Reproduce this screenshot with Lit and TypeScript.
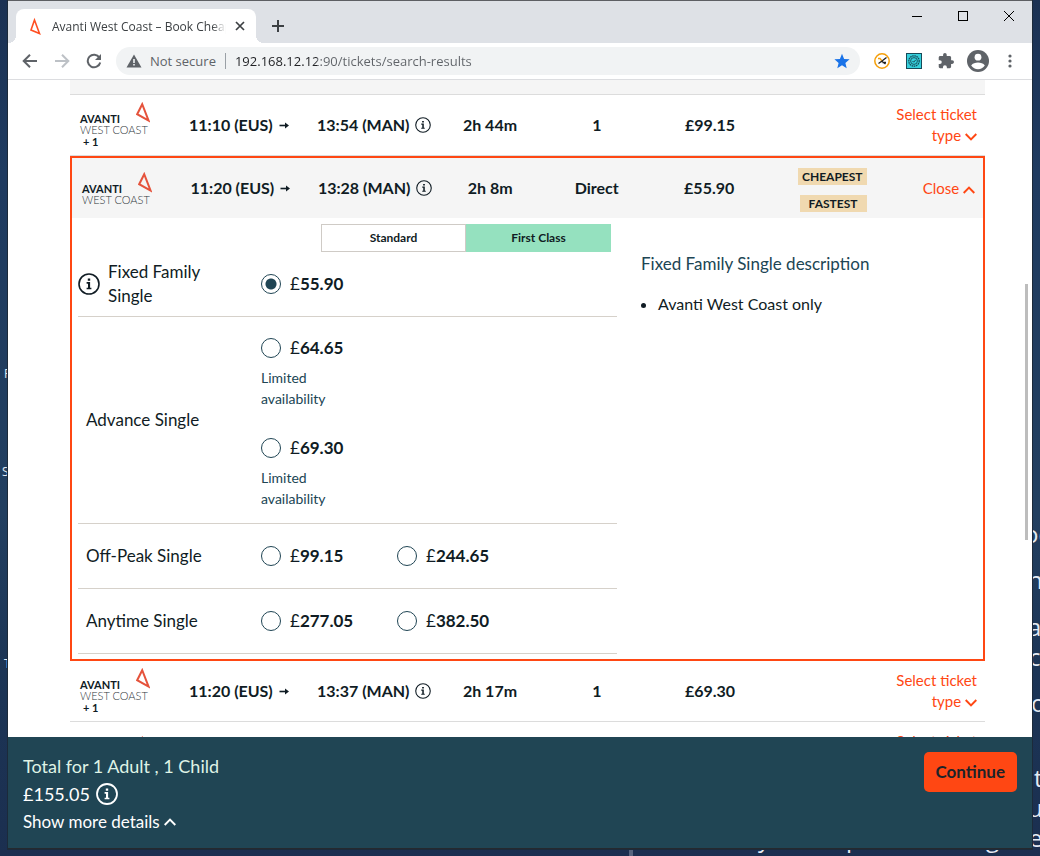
import { LitElement, html, css, svg, nothing } from "lit";
import { customElement, property, state } from "lit/decorators.js";
import { classMap } from "lit/directives/class-map.js";

interface Journey {
  from: string;
  to: string;
  duration: string;
  changes: string;
  price: string;
  extra?: string;
  badges?: string[];
}

interface Fare {
  name: string;
  info?: boolean;
  limited?: boolean;
  options: string[][];
}

const infoIcon = (size: number, stroke: number) => html`
  <svg width=${size} height=${size} viewBox="0 0 22 22" aria-hidden="true">
    <circle cx="11" cy="11" r="10" fill="none" stroke="currentColor" stroke-width=${stroke} />
    <path d="M9.8 5.4h2.4v2.3H9.8zM8.6 9.1h3.5v5.6h1.3v1.6H8.6v-1.6h1.4v-4H8.6z" fill="currentColor" />
  </svg>
`;

const chevron = (up: boolean) => html`
  <svg width="12" height="8" viewBox="0 0 12 8" aria-hidden="true">
    <path d=${up ? "M0.7 7L6 1.5L11.3 7" : "M0.7 1L6 6.5L11.3 1"} fill="none" stroke="currentColor" stroke-width="1.9" />
  </svg>
`;

const triangle = svg`<path d="M6.2 2.2L1.2 12.2L12.6 18.6L6.2 2.2Z" fill="none" stroke="#e5533c" stroke-width="2" />`;

@customElement("browser-chrome")
class BrowserChrome extends LitElement {
  static styles = css`
    :host {
      display: block;
      font-family: "Open Sans", "Noto Sans", sans-serif;
      color: #3c4043;
    }
    button {
      border: 0;
      padding: 0;
      background: none;
      color: inherit;
      display: grid;
      place-items: center;
    }
    svg {
      display: block;
    }
    .strip {
      display: flex;
      align-items: flex-end;
      height: 42px;
      background: #dee1e6;
      border-top: 1px solid #5d5f63;
      padding-left: 8px;
    }
    .tab {
      position: relative;
      display: flex;
      align-items: center;
      width: 240px;
      height: 34px;
      background: #fff;
      border-radius: 8px 8px 0 0;
      box-sizing: border-box;
      padding: 0 10px 0 12px;
      font-size: 12px;
    }
    .tab::before,
    .tab::after {
      content: "";
      position: absolute;
      bottom: 0;
      width: 8px;
      height: 8px;
    }
    .tab::before {
      left: -8px;
      background: radial-gradient(circle at 0 0, transparent 8px, #fff 8px);
    }
    .tab::after {
      right: -8px;
      background: radial-gradient(circle at 100% 0, transparent 8px, #fff 8px);
    }
    .title {
      flex: 1;
      min-width: 0;
      margin: 0 8px 0 10px;
      overflow: hidden;
      white-space: nowrap;
      mask-image: linear-gradient(90deg, #000 92%, transparent);
    }
    .new {
      width: 28px;
      height: 34px;
      margin-left: 8px;
    }
    .controls {
      display: flex;
      align-self: flex-start;
      margin-left: auto;
      color: #000;
    }
    .controls button {
      width: 46px;
      height: 29px;
    }
    .bar {
      display: flex;
      align-items: center;
      height: 36px;
      padding: 0 18px 0 14px;
      background: #fff;
      border-bottom: 1px solid #dcdde0;
      color: #5f6368;
    }
    .nav {
      display: flex;
      gap: 16px;
      margin-right: 14px;
    }
    .faded {
      color: #bdc1c6;
    }
    .address {
      flex: 1;
      display: flex;
      align-items: center;
      height: 28px;
      padding: 0 10px;
      border-radius: 14px;
      background: #f1f3f4;
      font-size: 13px;
    }
    .secure {
      margin-left: 8px;
      padding-right: 9px;
      border-right: 1px solid #9aa0a6;
      line-height: 16px;
    }
    .url {
      flex: 1;
      min-width: 0;
      border: 0;
      padding: 0 0 0 9px;
      background: linear-gradient(90deg, #202124 91px, #5f6368 91px);
      background-clip: text;
      outline: none;
      font: inherit;
      color: transparent;
    }
    .tools {
      display: flex;
      align-items: center;
      gap: 16px;
      margin-left: 14px;
    }
    .tools .menu {
      width: 8px;
      margin-left: 1px;
    }
    .tools .person {
      margin: 0 0 0 -3px;
    }
  `;

  render() {
    return html`
      <div class="strip">
        <div class="tab">
          <svg width="14" height="20" viewBox="0 0 14 20">
            <path d="M6.5 4L3 14L11.5 17.5Z" fill="none" stroke="#ff4f22" stroke-width="1.6" />
          </svg>
          <span class="title">Avanti West Coast – Book Cheap</span>
          <button aria-label="Close tab">
            <svg width="12" height="12" viewBox="0 0 12 12">
              <path d="M2 2L10 10M10 2L2 10" stroke="#3c4043" stroke-width="1.7" />
            </svg>
          </button>
        </div>
        <button class="new" aria-label="New tab">
          <svg width="12" height="12" viewBox="0 0 12 12">
            <path d="M6 0V12M0 6H12" stroke="#3c4043" stroke-width="2" />
          </svg>
        </button>
        <div class="controls">
          <button aria-label="Minimise">
            <svg width="10" height="10" viewBox="0 0 10 10"><path d="M0 5.5H10" stroke="currentColor" /></svg>
          </button>
          <button aria-label="Maximise">
            <svg width="10" height="10" viewBox="0 0 10 10">
              <rect x="0.5" y="0.5" width="9" height="9" fill="none" stroke="currentColor" />
            </svg>
          </button>
          <button aria-label="Close window">
            <svg width="10" height="10" viewBox="0 0 10 10"><path d="M0 0L10 10M10 0L0 10" stroke="currentColor" /></svg>
          </button>
        </div>
      </div>
      <div class="bar">
        <div class="nav">
          <button aria-label="Back">
            <svg width="16" height="16" viewBox="0 0 16 16">
              <path d="M15 8H2M8 1.7L1.7 8L8 14.3" fill="none" stroke="currentColor" stroke-width="2" />
            </svg>
          </button>
          <button class="faded" aria-label="Forward">
            <svg width="16" height="16" viewBox="0 0 16 16">
              <path d="M1 8H14M8 1.7L14.3 8L8 14.3" fill="none" stroke="currentColor" stroke-width="2" />
            </svg>
          </button>
          <button aria-label="Reload">
            <svg width="16" height="16" viewBox="0 0 16 16">
              <path d="M13.4 4.6A6.3 6.3 0 1 0 14.2 9.4" fill="none" stroke="currentColor" stroke-width="2" />
              <path d="M15 1V7H9Z" fill="currentColor" />
            </svg>
          </button>
        </div>
        <div class="address">
          <svg width="16" height="14" viewBox="0 0 16 14">
            <path d="M8 0.5L15.5 13.5H0.5Z" fill="#5f6368" />
            <path d="M7.2 5h1.6v4H7.2zM7.2 10h1.6v1.6H7.2z" fill="#f1f3f4" />
          </svg>
          <span class="secure">Not secure</span>
          <input class="url" aria-label="Address" value="192.168.12.12:90/tickets/search-results" />
          <button aria-label="Bookmark">
            <svg width="16" height="16" viewBox="0 0 16 16">
              <path d="M8 0.8L10.1 5.9L15.6 6.3L11.4 9.9L12.7 15.2L8 12.3L3.3 15.2L4.6 9.9L0.4 6.3L5.9 5.9Z" fill="#1a73e8" />
            </svg>
          </button>
        </div>
        <div class="tools">
          <button aria-label="Extension">
            <svg width="16" height="16" viewBox="0 0 16 16">
              <circle cx="8" cy="8" r="7.2" fill="#fff" stroke="#f59f0a" stroke-width="1.5" />
              <path d="M4 5.5H6L8 8" fill="none" stroke="#f59f0a" stroke-width="1.4" />
              <path d="M4.500 10.500L8 8L12.500 4.500M8 8.500L11.500 11M8.500 9.500H12" fill="none" stroke="#222" stroke-width="1.3" />
            </svg>
          </button>
          <button aria-label="Extension">
            <svg width="16" height="16" viewBox="0 0 16 16">
              <rect x="0.5" y="0.5" width="15" height="15" fill="#35d0dc" stroke="#174a58" />
              <circle cx="8" cy="8" r="5.2" fill="none" stroke="#174a58" stroke-width="1.2" stroke-dasharray="1.6 0.6" />
              <circle cx="8" cy="8" r="3.4" fill="none" stroke="#174a58" stroke-width="0.9" />
              <path d="M6.5 8L7.7 9.2L9.7 6.9" fill="none" stroke="#174a58" />
            </svg>
          </button>
          <button aria-label="Extensions">
            <svg width="16" height="16" viewBox="1 1 22 22">
              <path
                d="M20.5 11H19V7c0-1.1-.9-2-2-2h-4V3.5a2.5 2.5 0 0 0-5 0V5H4c-1.1 0-2 .9-2 2v3.8h1.5a2.7 2.7 0 0 1 0 5.4H2V20c0 1.1.9 2 2 2h3.8v-1.5a2.7 2.7 0 0 1 5.4 0V22H17c1.1 0 2-.9 2-2v-4h1.5a2.5 2.5 0 0 0 0-5z"
                fill="#5f6368"
              />
            </svg>
          </button>
          <button class="person" aria-label="Profile">
            <svg width="22" height="22" viewBox="0 0 22 22">
              <circle cx="11" cy="11" r="11" fill="#5f6368" />
              <circle cx="11" cy="7.2" r="3.4" fill="#fff" />
              <path d="M4.2 15.6C5.6 13.4 8.4 12.6 11 12.6S16.4 13.4 17.8 15.6A8.2 8.2 0 0 1 4.2 15.6Z" fill="#fff" />
            </svg>
          </button>
          <button class="menu" aria-label="Menu">
            <svg width="4" height="14" viewBox="0 0 4 14" fill="#5f6368">
              <circle cx="2" cy="2" r="1.6" />
              <circle cx="2" cy="7" r="1.6" />
              <circle cx="2" cy="12" r="1.6" />
            </svg>
          </button>
        </div>
      </div>
    `;
  }
}

@customElement("journey-row")
class JourneyRow extends LitElement {
  @property({ attribute: false }) journey!: Journey;
  @property({ type: Boolean }) open = false;

  static styles = css`
    :host {
      display: block;
      color: #101c24;
    }
    .row {
      display: grid;
      grid-template-columns: 119fr 128fr 123fr 100fr 114fr 112fr 102fr 117fr;
      align-items: center;
      min-height: 60px;
      font-size: 16px;
      line-height: 20px;
      font-weight: 700;
    }
    .open {
      background: #f5f5f5;
    }
    .brand {
      display: grid;
      grid-template-columns: 42px 28px;
      grid-template-rows: 11px 11px 11px;
      padding-left: 10px;
      font-size: 11px;
      line-height: 11px;
      white-space: nowrap;
    }
    .mark {
      grid-area: 1 / 2 / 3 / 3;
      justify-self: end;
      display: block;
    }
    .name {
      grid-area: 2 / 1;
    }
    .line {
      grid-area: 3 / 1 / 4 / 3;
      font-weight: 300;
      color: #30373c;
    }
    .extra {
      grid-area: 4 / 1 / 5 / 3;
      padding-left: 3px;
      line-height: 13px;
    }
    .stop {
      display: flex;
      align-items: center;
      gap: 6px;
      white-space: nowrap;
    }
    .mid {
      text-align: center;
    }
    .badges {
      display: grid;
      justify-items: end;
      gap: 10px;
      padding-top: 3px;
    }
    .badge {
      padding: 0 4px;
      background: #f0d9b0;
      font-size: 12px;
      line-height: 17px;
    }
    .wide {
      padding: 0 9px;
    }
    .toggle {
      justify-self: end;
      width: 90px;
      padding: 0 8px 0 0;
      border: 0;
      background: none;
      font: 400 15px/21px "Lato", sans-serif;
      color: #ff4713;
      text-align: right;
    }
  `;

  render() {
    const j = this.journey;
    return html`
      <div class=${classMap({ row: true, open: this.open })}>
        <div class="brand">
          <svg class="mark" width="14" height="22" viewBox="0 0 14 22">${triangle}</svg>
          <span class="name">AVANTI</span>
          <span class="line">WEST COAST</span>
          ${j.extra ? html`<span class="extra">${j.extra}</span>` : nothing}
        </div>
        <div class="stop">
          ${j.from}
          <svg width="11" height="8" viewBox="0 0 11 8" aria-hidden="true">
            <path d="M0.5 4.5H8" stroke="currentColor" stroke-width="1.6" />
            <path d="M6 1.5L10 4.5L6 7.5Z" fill="currentColor" />
          </svg>
        </div>
        <div class="stop">${j.to} ${infoIcon(16, 1.5)}</div>
        <div class="mid">${j.duration}</div>
        <div class="mid">${j.changes}</div>
        <div class="mid">${j.price}</div>
        <div class="badges">
          ${(j.badges ?? []).map(
            (b) => html`<span class=${classMap({ badge: true, wide: b.length < 8 })}>${b}</span>`
          )}
        </div>
        <button class="toggle" aria-expanded=${this.open}>
          ${this.open ? "Close" : "Select ticket type"} ${chevron(this.open)}
        </button>
      </div>
    `;
  }
}

@customElement("fare-panel")
class FarePanel extends LitElement {
  @state() private chosen = "55.90";

  private fares: Fare[] = [
    { name: "Fixed Family Single", info: true, options: [["55.90"]] },
    { name: "Advance Single", limited: true, options: [["64.65"], ["69.30"]] },
    { name: "Off-Peak Single", options: [["99.15", "244.65"]] },
    { name: "Anytime Single", options: [["277.05", "382.50"]] },
  ];

  static styles = css`
    :host {
      display: grid;
      grid-template-columns: 539fr 336fr;
      gap: 24px;
      padding: 6px 6px 5px;
      color: #101c24;
      font-size: 17px;
      line-height: 24px;
    }
    .classes {
      display: grid;
      grid-template-columns: 1fr 1fr;
      width: 290px;
      margin: 0 6px 0 auto;
    }
    .classes button {
      height: 28px;
      border: 1px solid #cfcbc6;
      padding: 0;
      background: #fff;
      font: 700 12px/16px "Lato", sans-serif;
      color: #101c24;
    }
    .classes .on {
      border-color: #95e1bf;
      background: #95e1bf;
    }
    .fare {
      display: grid;
      grid-template-columns: 183fr 356fr;
      align-items: center;
      min-height: 64px;
      border-bottom: 1px solid #d6d1ca;
    }
    .name {
      display: flex;
      align-items: center;
      gap: 8px;
      padding-left: 8px;
    }
    .info {
      padding: 0 50px 0 0;
    }
    .name svg {
      flex: none;
    }
    .options {
      display: grid;
      gap: 27px;
    }
    .limited {
      padding: 19px 0 14px;
    }
    .pair {
      display: grid;
      grid-template-columns: 136fr 220fr;
    }
    label {
      display: flex;
      align-items: center;
      gap: 9px;
      font-weight: 700;
    }
    .pound {
      font-weight: 400;
    }
    input {
      appearance: none;
      width: 20px;
      height: 20px;
      margin: 0;
      border: 1px solid #204554;
      border-radius: 50%;
      background: #fff;
    }
    input:checked {
      background: radial-gradient(circle, #204554 5px, #fff 6px);
    }
    .note {
      width: 80px;
      margin: 7px 0 0;
      font-size: 14px;
      line-height: 21px;
      color: #204554;
    }
    .about {
      padding-top: 28px;
    }
    h2 {
      margin: 0 0 16px;
      font-size: 17px;
      line-height: 24px;
      font-weight: 400;
      color: #204554;
    }
    ul {
      margin: 0;
      padding-left: 17px;
      font-size: 16px;
    }
  `;

  render() {
    return html`
      <div>
        <div class="classes">
          <button>Standard</button>
          <button class="on">First Class</button>
        </div>
        ${this.fares.map(
          (fare) => html`
            <div class="fare" role="group" aria-label=${fare.name}>
              <div class=${classMap({ name: true, info: !!fare.info })}>
                ${fare.info ? infoIcon(22, 1.6) : nothing}<span>${fare.name}</span>
              </div>
              <div class=${classMap({ options: true, limited: !!fare.limited })}>
                ${fare.options.map(
                  (pair) => html`
                    <div>
                      <div class="pair">
                        ${pair.map(
                          (price) => html`
                            <label>
                              <input
                                type="radio"
                                name="fare"
                                .checked=${this.chosen === price}
                                @change=${() => (this.chosen = price)}
                              />
                              <span><span class="pound">£</span>${price}</span>
                            </label>
                          `
                        )}
                      </div>
                      ${fare.limited ? html`<p class="note">Limited availability</p>` : nothing}
                    </div>
                  `
                )}
              </div>
            </div>
          `
        )}
      </div>
      <div class="about">
        <h2>Fixed Family Single description</h2>
        <ul>
          <li>Avanti West Coast only</li>
        </ul>
      </div>
    `;
  }
}

@customElement("app-root")
class AppRoot extends LitElement {
  private journeys: Journey[] = [
    { from: "11:10 (EUS)", to: "13:54 (MAN)", duration: "2h 44m", changes: "1", price: "£99.15", extra: "+ 1" },
    {
      from: "11:20 (EUS)",
      to: "13:28 (MAN)",
      duration: "2h 8m",
      changes: "Direct",
      price: "£55.90",
      badges: ["CHEAPEST", "FASTEST"],
    },
    { from: "11:20 (EUS)", to: "13:37 (MAN)", duration: "2h 17m", changes: "1", price: "£69.30", extra: "+ 1" },
    { from: "11:40 (EUS)", to: "13:49 (MAN)", duration: "2h 9m", changes: "Direct", price: "£69.30" },
  ];

  private wallpaper = [
    { text: "oc", x: 1024, y: 520 },
    { text: "n", x: 1028, y: 566 },
    { text: "at", x: 1028, y: 613 },
    { text: "c", x: 1029, y: 643 },
    { text: "o", x: 1031, y: 689 },
    { text: "t", x: 1034, y: 764 },
    { text: "u", x: 1028, y: 794 },
    { text: "e", x: 1029, y: 824 },
    { text: "y", x: 758, y: 824 },
    { text: "p", x: 846, y: 824 },
    { text: "g", x: 986, y: 824 },
  ];

  private shortcuts = [
    { text: "P", x: 4, y: 366 },
    { text: "S", x: 2, y: 464 },
    { text: "T", x: 4, y: 656 },
  ];

  static styles = css`
    :host {
      display: block;
      position: relative;
      height: 100vh;
      overflow: hidden;
      background: linear-gradient(180deg, #1b3153, #1f3b60 20%, #223f60 60%, #1c3556 78%, #1b2f50);
      font-family: "Lato", sans-serif;
    }
    .wall,
    .shortcut {
      position: absolute;
      color: #e4eaf2;
      font: 24px/28px "Open Sans", sans-serif;
    }
    .shortcut {
      font-size: 12px;
      line-height: 16px;
    }
    .rule {
      position: absolute;
      left: 629px;
      bottom: 0;
      width: 4px;
      height: 20px;
      background: #56657f;
    }
    .window {
      position: relative;
      display: flex;
      flex-direction: column;
      height: calc(100vh - 7px);
      margin: 0 8px;
      box-sizing: border-box;
      border-bottom: 1px solid #25292e;
      background: #fff;
      box-shadow: 0 0 0 1px #1c2a3a;
    }
    .page {
      position: relative;
      flex: 1;
      min-height: 0;
      overflow: hidden;
      padding: 0 47px 0 62px;
    }
    .heading {
      height: 14px;
      background: #f5f5f5;
      border-bottom: 1px solid #dcdcdc;
    }
    .item {
      border-bottom: 1px solid #dcdcdc;
    }
    .expanded {
      border: 2px solid #ff4713;
    }
    .thumb {
      position: absolute;
      top: 204px;
      right: 4px;
      width: 3px;
      height: 256px;
      background: #bdbdbd;
    }
    .basket {
      display: flex;
      justify-content: space-between;
      align-items: flex-start;
      padding: 15px 15px 13px;
      background: #204554;
      color: #fff;
      font-size: 18px;
    }
    .total {
      display: grid;
      line-height: 28px;
    }
    .who {
      color: #dff3e6;
    }
    .sum {
      display: flex;
      align-items: center;
      gap: 6px;
    }
    .more {
      display: flex;
      align-items: center;
      gap: 4px;
      border: 0;
      padding: 0;
      background: none;
      color: inherit;
      font: 400 17px/27px "Lato", sans-serif;
    }
    .continue {
      height: 40px;
      padding: 0 12px;
      border: 0;
      border-radius: 5px;
      background: #ff4713;
      color: #1c2329;
      font: 700 17px/20px "Lato", sans-serif;
    }
  `;

  render() {
    return html`
      <div class="rule"></div>
      ${this.wallpaper.map((w) => html`<span class="wall" style="left:${w.x}px;top:${w.y}px">${w.text}</span>`)}
      ${this.shortcuts.map((w) => html`<span class="shortcut" style="left:${w.x}px;top:${w.y}px">${w.text}</span>`)}
      <div class="window">
        <browser-chrome></browser-chrome>
        <main class="page">
          <div class="heading"></div>
          ${this.journeys.map((j, i) =>
            i === 1
              ? html`<section class="expanded">
                  <journey-row .journey=${j} open></journey-row>
                  <fare-panel></fare-panel>
                </section>`
              : html`<section class="item"><journey-row .journey=${j}></journey-row></section>`
          )}
          <div class="thumb"></div>
        </main>
        <footer class="basket">
          <div class="total">
            <span class="who">Total for 1 Adult , 1 Child</span>
            <span class="sum">£155.05 ${infoIcon(22, 1.8)}</span>
            <button class="more">Show more details ${chevron(true)}</button>
          </div>
          <button class="continue">Continue</button>
        </footer>
      </div>
    `;
  }
}
